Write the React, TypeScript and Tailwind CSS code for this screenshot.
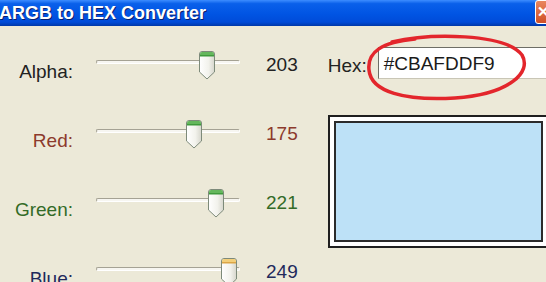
const channels = [
  { label: "Alpha:", value: 203, text: "text-[#222222]", top: "#64b75c", topDark: "#3f9a3c" },
  { label: "Red:", value: 175, text: "text-[#8c3a2c]", top: "#64b75c", topDark: "#3f9a3c" },
  { label: "Green:", value: 221, text: "text-[#336b27]", top: "#64b75c", topDark: "#3f9a3c" },
  { label: "Blue:", value: 249, text: "text-[#1f2a5c]", top: "#f3cf7a", topDark: "#dca646" },
];

function Thumb({ top, topDark }: { top: string; topDark: string }) {
  return (
    <svg width="18" height="29" viewBox="0 0 18 29">
      <defs>
        <linearGradient id={"body" + top} x1="0" y1="0" x2="1" y2="0">
          <stop offset="0" stopColor="#ffffff" />
          <stop offset="0.6" stopColor="#f2f2ec" />
          <stop offset="1" stopColor="#d6d6cc" />
        </linearGradient>
      </defs>
      <path
        d="M1.5 3 Q1.5 0.5 4 0.5 L14 0.5 Q16.5 0.5 16.5 3 L16.5 21 L9 28 L1.5 21 Z"
        fill={"url(#body" + top + ")"}
        stroke="#7d8a7a"
        strokeWidth="1"
      />
      <path d="M2 3 Q2 1 4 1 L14 1 Q16 1 16 3 L16 5 L2 5 Z" fill={top} />
      <rect x="2" y="4" width="14" height="1.5" fill={topDark} />
    </svg>
  );
}

function Slider({ value, top, topDark }: { value: number; top: string; topDark: string }) {
  const center = 14 + (value / 255) * 122;
  return (
    <div className="relative w-[144px] h-[69px]">
      <div className="absolute left-0 right-0 top-[15px] h-[4px] rounded-sm border border-t-[#a5a294] border-l-[#a5a294] border-b-white border-r-white bg-[#f7f6f1]" />
      <div className="absolute top-[6px]" style={{ left: center - 9 }}>
        <Thumb top={top} topDark={topDark} />
      </div>
    </div>
  );
}

export default function App() {
  return (
    <div className="relative w-[546px] h-[282px] overflow-hidden bg-[#ece9d8] font-['Liberation_Sans',Arial,sans-serif]">
      <div className="flex h-[26px] items-center justify-between bg-[linear-gradient(to_bottom,#3d8dff_0%,#0a60ea_14%,#0054e3_55%,#004bd8_85%,#0038a8_100%)]">
        <span className="-ml-[1px] text-[18px] font-bold leading-none text-white [text-shadow:1px_1px_0_#0a1f6e]">
          ARGB to HEX Converter
        </span>
        <div className="mr-[-6px] flex h-[24px] w-[17px] items-center justify-center self-start rounded-[3px] border border-white bg-[linear-gradient(to_bottom,#e9865f,#cf4f26)] text-[15px] font-bold text-white">
          ✕
        </div>
      </div>

      <div className="flex">
        <div className="flex flex-col pt-[19px]">
          {channels.map((c) => (
            <div key={c.label} className="flex h-[69px]">
              <div className={"w-[73px] pt-[16px] text-right text-[19px] leading-[22px] " + c.text}>{c.label}</div>
              <div className="ml-[23px]">
                <Slider value={c.value} top={c.top} topDark={c.topDark} />
              </div>
              <div className={"ml-[26px] pt-[9px] text-[19px] leading-[22px] " + c.text}>{c.value}</div>
            </div>
          ))}
        </div>

        <div className="ml-[30px] flex flex-col pt-[21px]">
          <div className="flex items-center">
            <span className="w-[50px] pt-[6px] text-[19px] leading-[22px] text-[#222222]">Hex:</span>
            <div className="flex h-[32px] w-[180px] items-center border border-t-[#6e6e66] border-l-[#6e6e66] border-b-[#c9c6b6] border-r-[#c9c6b6] bg-white pl-[5px] pt-[3px] text-[19px] text-[#1a1a1a]">
              #CBAFDDF9
            </div>
          </div>
          <div className="mt-[36px] w-[221px] h-[133px] border-2 border-[#1f1f1f] bg-white p-[4px]">
            <div className="h-full w-full border-2 border-[#2b2b2b] bg-[#bde1f7]" />
          </div>
        </div>
      </div>

      <svg className="pointer-events-none absolute left-0 top-0" width="546" height="282" viewBox="0 0 546 282">
        <path
          d="M392 42 C430 33 505 33 522 55 C532 72 510 94 455 98 C405 101 371 92 369 70 C367 52 382 42 415 39"
          fill="none"
          stroke="#e3262c"
          strokeWidth="3.5"
          strokeLinecap="round"
        />
      </svg>
    </div>
  );
}
